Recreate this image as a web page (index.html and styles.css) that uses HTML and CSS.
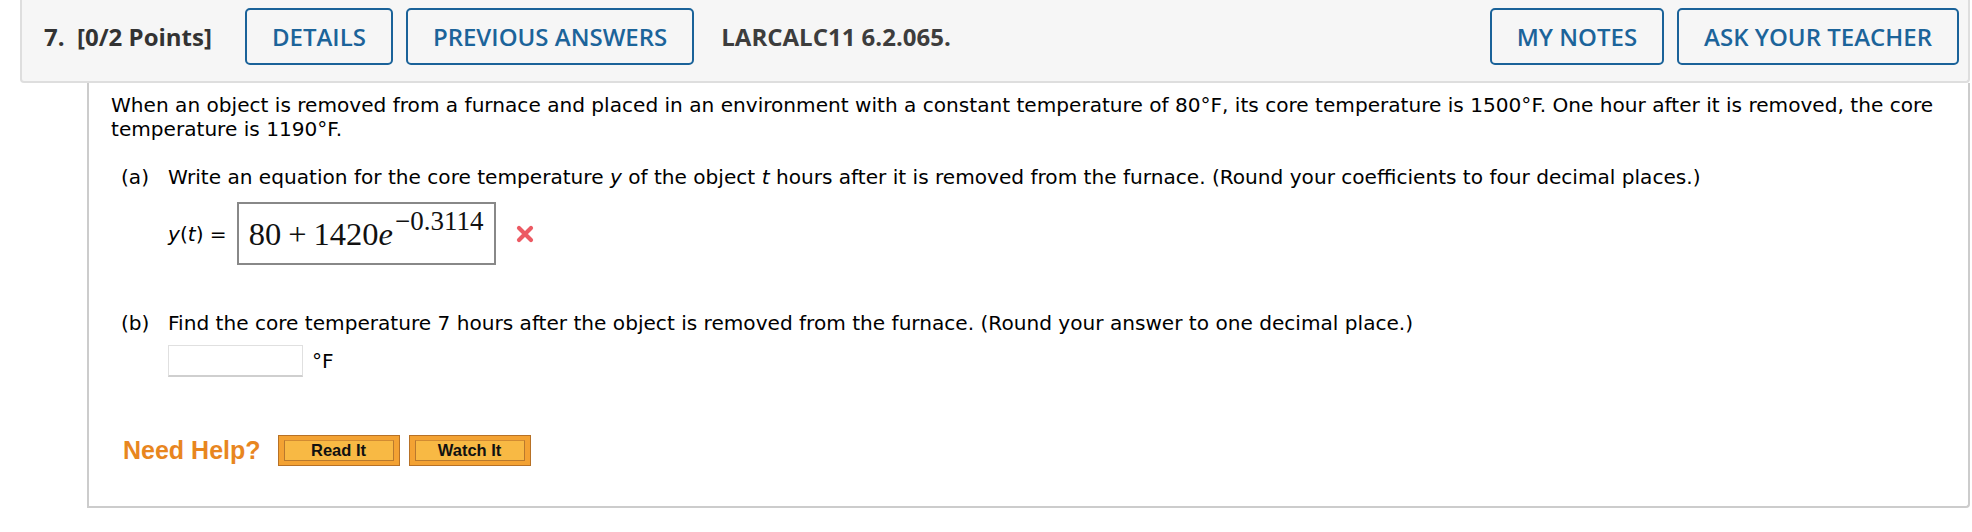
FILE: index.html
```html
<!DOCTYPE html>
<html>
<head>
<meta charset="utf-8">
<link rel="stylesheet" href="styles.css">
</head>
<body>
<div class="page">
  <div class="qhead">
    <div class="qnum">7.&nbsp;&nbsp;[0/2 Points]</div>
    <button class="hbtn">DETAILS</button>
    <button class="hbtn">PREVIOUS ANSWERS</button>
    <div class="qref">LARCALC11 6.2.065.</div>
    <div class="spacer"></div>
    <button class="hbtn">MY NOTES</button>
    <button class="hbtn last">ASK YOUR TEACHER</button>
  </div>
  <div class="qbody">
    <p class="intro">When an object is removed from a furnace and placed in an environment with a constant temperature of 80°F, its core temperature is 1500°F. One hour after it is removed, the core temperature is 1190°F.</p>
    <div class="part part-a">
      <span class="plabel">(a)</span><span class="ptext">Write an equation for the core temperature <i>y</i> of the object <i>t</i> hours after it is removed from the furnace. (Round your coefficients to four decimal places.)</span>
    </div>
    <div class="answer-row">
      <span class="ylabel"><i>y</i>(<i>t</i>) =</span>
      <div class="mathbox"><span class="m">80</span><span class="op">+</span><span class="m">1420<i>e</i></span><sup class="sup">−0.3114</sup></div>
      <svg class="xmark" width="20" height="20" viewBox="0 0 20 20"><path d="M4 4 L16 16 M16 4 L4 16" stroke="#ec5a63" stroke-width="4.2" stroke-linecap="round"/></svg>
    </div>
    <div class="part part-b">
      <span class="plabel">(b)</span><span class="ptext">Find the core temperature 7 hours after the object is removed from the furnace. (Round your answer to one decimal place.)</span>
    </div>
    <div class="answer-b">
      <span class="ansinput"></span><span class="unit">°F</span>
    </div>
    <div class="help">
      <span class="needhelp">Need Help?</span>
      <span class="obtn"><span class="obtn-in">Read It</span></span>
      <span class="obtn"><span class="obtn-in">Watch It</span></span>
    </div>
  </div>
</div>
</body>
</html>
```
FILE: styles.css
```css
html, body {
  margin: 0;
  padding: 0;
  background: #ffffff;
}
.page {
  padding-left: 20px;
  width: 1950px;
}
.qhead {
  display: flex;
  align-items: center;
  height: 81px;
  padding: 0 9px 0 22px;
  background: #f6f6f6;
  border: 2px solid #dedede;
  border-top: none;
  border-radius: 0 0 4px 4px;
  font-family: "Open Sans", sans-serif;
}
.qnum {
  font-size: 24px;
  font-weight: 700;
  color: #333333;
  margin-right: 33px;
  margin-top: -8px;
}
.hbtn {
  font-family: "Open Sans", sans-serif;
  font-size: 24px;
  font-weight: 600;
  color: #1c649a;
  background: transparent;
  border: 2px solid #1a6299;
  border-radius: 5px;
  height: 57px;
  padding: 0 25px;
  margin-right: 13px;
  margin-top: -8px;
  cursor: pointer;
}
.hbtn.last {
  margin-right: 0;
}
.qref {
  font-size: 24px;
  font-weight: 700;
  color: #3d3d3d;
  margin-left: 14px;
  margin-top: -8px;
}
.spacer {
  flex: 1;
}
.qbody {
  margin-left: 67px;
  border: 2px solid #cccccc;
  border-top: none;
  border-radius: 0 0 4px 0;
  padding: 10px 20px 40px 22px;
  font-family: "DejaVu Sans", Verdana, sans-serif;
  font-size: 20.1px;
  color: #000000;
}
.intro {
  margin: 0;
  line-height: 24px;
}
.part {
  display: flex;
  line-height: 24px;
  margin-left: 10px;
}
.part-a {
  margin-top: 24px;
}
.plabel {
  width: 47px;
  flex: none;
}
.answer-row {
  display: flex;
  align-items: center;
  margin-top: 13px;
  margin-left: 57px;
}
.ylabel {
  margin-right: 10px;
}
.mathbox {
  display: flex;
  align-items: baseline;
  box-sizing: border-box;
  height: 63px;
  padding: 0 11px 0 10px;
  border: 2px solid #888888;
  font-family: "Liberation Serif", "Times New Roman", serif;
  font-size: 32.5px;
  line-height: 61px;
  color: #111111;
}
.op {
  margin: 0 7px;
}
.sup {
  font-size: 27px;
  vertical-align: baseline;
  position: relative;
  top: -15px;
  margin-left: 2px;
}
.xmark {
  margin-left: 19px;
}
.part-b {
  margin-top: 46px;
}
.answer-b {
  display: flex;
  align-items: center;
  margin-left: 57px;
  margin-top: 10px;
}
.ansinput {
  display: inline-block;
  width: 133px;
  height: 29px;
  border: 1px solid #e0e0e0;
  border-bottom: 2px solid #cfcfcf;
}
.unit {
  margin-left: 9px;
}
.help {
  display: flex;
  align-items: center;
  margin-top: 58px;
  margin-left: 12px;
}
.needhelp {
  font-family: "Liberation Sans", Arial, sans-serif;
  font-weight: 700;
  font-size: 25px;
  color: #e8861f;
  margin-right: 17px;
}
.obtn {
  display: inline-block;
  width: 122px;
  height: 31px;
  box-sizing: border-box;
  border: 1px solid #b77126;
  background: #f3a233;
  padding: 4px 5px;
  margin-right: 9px;
}
.obtn-in {
  display: block;
  height: 21px;
  box-sizing: border-box;
  border: 1px solid #b8792e;
  border-top-color: #d28b32;
  background: #f8b944;
  font-family: "Liberation Sans", Arial, sans-serif;
  font-weight: 700;
  font-size: 16.5px;
  line-height: 19px;
  text-align: center;
  color: #111111;
}
```
